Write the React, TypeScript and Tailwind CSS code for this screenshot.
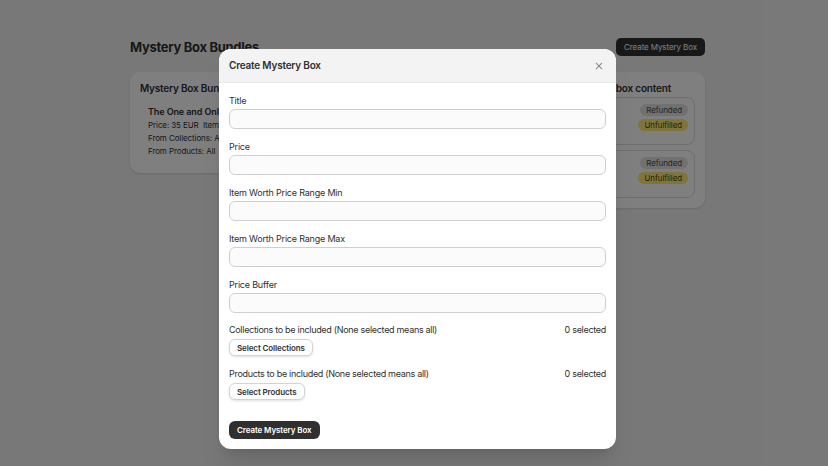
import React from "react";

function Field({ label }: { label: string }) {
  return (
    <div className="flex flex-col gap-[3px]">
      <div className="text-[9px] leading-[11px] tracking-[-0.2px] text-[#303030]">{label}</div>
      <div className="h-[20px] rounded-[6px] border border-[#cfcfcf] bg-[#fbfbfb]" />
    </div>
  );
}

function OrderCard({ name, date }: { name: string; date: string }) {
  return (
    <div className="flex h-[48px] justify-between rounded-[8px] border border-[#dcdcdc] pl-[10px] pr-[6px] pt-[6px] pb-[6px]">
      <div className="flex flex-col justify-between text-[8.5px] text-[#303030]">
        <div className="font-semibold">{name}</div>
        <div>{date}</div>
      </div>
      <div className="flex flex-col items-end gap-[3px]">
        <span className="flex h-[12px] items-center rounded-[6px] bg-[#e3e3e3] px-[6px] text-[8px] tracking-[-0.1px] text-[#4a4a4a]">Refunded</span>
        <span className="flex h-[12px] items-center rounded-[6px] bg-[#ffeb78] px-[6px] text-[8px] tracking-[-0.1px] text-[#4f4700]">Unfulfilled</span>
      </div>
    </div>
  );
}

export default function App() {
  return (
    <div
      className="relative h-[466px] w-[828px] overflow-hidden bg-[#f1f1f1]"
      style={{ fontFamily: "Inter, 'Noto Sans', sans-serif" }}
    >
      {/* Background page */}
      <div className="ml-[130px] flex w-[575px] flex-col pt-[38px]">
        <div className="flex h-[18px] items-center justify-between">
          <div className="mt-[2px] text-[13px] font-bold tracking-[-0.3px] text-[#303030]">Mystery Box Bundles</div>
          <div className="flex h-[18px] items-center rounded-[5px] bg-[#303030] px-[8px] text-[8px] tracking-[-0.1px] text-white">
            Create Mystery Box
          </div>
        </div>
        <div className="mt-[16px] grid grid-cols-2 items-start gap-[12px]">
          <div className="h-[101px] rounded-[10px] bg-white px-[10px] pt-[10px] shadow-sm">
            <div className="text-[10px] leading-[13px] font-semibold tracking-[-0.2px] text-[#303030]">Mystery Box Bundles</div>
            <div className="mt-[10px] flex flex-col pl-[8px] text-[8px] leading-[13px] tracking-[-0.1px] text-[#303030]">
              <div className="mb-[1px] text-[9px] font-semibold">The One and Only Mystery Box</div>
              <div>Price: 35 EUR&nbsp;&nbsp;Item Worth: 10 - 50 EUR</div>
              <div>From Collections: All</div>
              <div>From Products: All</div>
            </div>
          </div>
          <div className="h-[136px] rounded-[10px] bg-white px-[10px] pt-[10px] shadow-sm">
            <div className="pr-[24px] text-right text-[10px] leading-[13px] font-semibold tracking-[-0.2px] text-[#303030]">
              Recent orders with mystery box content
            </div>
            <div className="mt-[2px] flex flex-col gap-[5px]">
              <OrderCard name="#1002" date="Jan 5, 2025, 3:12 PM" />
              <OrderCard name="#1001" date="Jan 4, 2025 · Paid" />
            </div>
          </div>
        </div>
      </div>

      {/* Overlay */}
      <div className="absolute inset-0 bg-black/50" />

      {/* Modal */}
      <div className="absolute left-[219px] top-[49px] flex h-[400px] w-[397px] flex-col overflow-hidden rounded-[12px] bg-white shadow-xl">
        <div className="flex h-[34px] shrink-0 items-center justify-between border-b border-[#ebebeb] bg-[#f3f3f3] px-[10px]">
          <div className="text-[10px] font-semibold tracking-[-0.2px] text-[#303030]">Create Mystery Box</div>
          <svg width="8" height="8" viewBox="0 0 10 10" className="mr-[3px]">
            <path d="M1.5 1.5 L8.5 8.5 M8.5 1.5 L1.5 8.5" stroke="#8a8a8a" strokeWidth="1.3" strokeLinecap="round" />
          </svg>
        </div>
        <div className="flex flex-col px-[10px] pt-[12px]">
          <div className="flex flex-col gap-[12px]">
            <Field label="Title" />
            <Field label="Price" />
            <Field label="Item Worth Price Range Min" />
            <Field label="Item Worth Price Range Max" />
            <Field label="Price Buffer" />
          </div>
          <div className="mt-[11px] flex flex-col gap-[3px]">
            <div className="flex justify-between text-[9px] leading-[12px] tracking-[-0.3px] text-[#303030]">
              <span>Collections to be included (None selected means all)</span>
              <span>0 selected</span>
            </div>
            <div className="flex">
              <span className="flex h-[17px] items-center rounded-[6px] border border-[#d4d4d4] bg-white px-[7px] text-[8px] font-semibold tracking-[-0.1px] text-[#303030] shadow-sm">
                Select Collections
              </span>
            </div>
          </div>
          <div className="mt-[12px] flex flex-col gap-[3px]">
            <div className="flex justify-between text-[9px] leading-[12px] tracking-[-0.3px] text-[#303030]">
              <span>Products to be included (None selected means all)</span>
              <span>0 selected</span>
            </div>
            <div className="flex">
              <span className="flex h-[17px] items-center rounded-[6px] border border-[#d4d4d4] bg-white px-[7px] text-[8px] font-semibold tracking-[-0.1px] text-[#303030] shadow-sm">
                Select Products
              </span>
            </div>
          </div>
          <div className="mt-[21px] flex">
            <span className="flex h-[18px] items-center rounded-[6px] bg-[#303030] px-[8px] text-[8px] font-semibold tracking-[-0.1px] text-white">
              Create Mystery Box
            </span>
          </div>
        </div>
      </div>
    </div>
  );
}
